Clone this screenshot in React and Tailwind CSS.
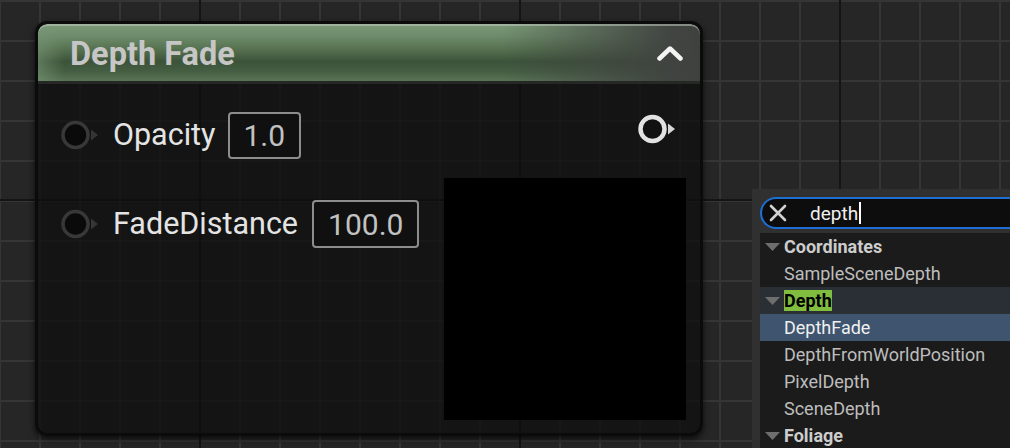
import React from "react";

function Pin({ output = false }) {
  const ring = output ? "#e2e2e2" : "#383838";
  const fill = output ? "#111111" : "#0a0a0a";
  const tri = output ? "#d6d6d6" : "#353535";
  return (
    <svg width="38" height="30" viewBox="0 0 38 30" className="shrink-0">
      <circle cx="14.5" cy="15" r={output ? 12 : 12.5} fill={fill} stroke={ring} strokeWidth={output ? 4.5 : 3.5} />
      <polygon points="30,9.5 37,15 30,20.5" fill={tri} />
    </svg>
  );
}

function Tri() {
  return (
    <svg width="15" height="8" viewBox="0 0 15 8" className="shrink-0">
      <polygon points="0,0 15,0 7.5,8" fill="#6e6e6e" />
    </svg>
  );
}

export default function App() {
  return (
    <div className="relative w-[1010px] h-[448px] overflow-hidden font-[Roboto,sans-serif] bg-[#262626] bg-[linear-gradient(90deg,#151515_2px,transparent_2px),linear-gradient(180deg,#151515_2px,transparent_2px),linear-gradient(90deg,#353535_2px,transparent_2px),linear-gradient(180deg,#353535_2px,transparent_2px)] bg-size-[320px_320px,320px_320px,40px_40px,40px_40px] bg-position-[199px_0px,0px_199px,39px_0px,0px_0px]">
      {/* Node */}
      <div className="absolute left-[35px] top-[21px] w-[668px] h-[415px] rounded-[12px] border-[3px] border-[#0b0b0b] bg-[rgba(12,14,12,0.72)] shadow-[0_3px_6px_rgba(0,0,0,0.7)] flex flex-col overflow-hidden">
        <div className="h-[57px] shrink-0 rounded-t-[9px] flex items-center justify-between pl-[32px] pr-[17px] shadow-[inset_0_2px_0_rgba(190,200,190,0.55)] bg-[linear-gradient(90deg,rgba(120,150,118,0.55)_0%,transparent_4%),linear-gradient(90deg,transparent_70%,rgba(64,67,64,0.96)_95%,#3f413f_100%),linear-gradient(180deg,#7b9a78_0%,#6d8b6a_22%,#55704f_45%,#3c533a_66%,#465f44_84%,#587455_100%)]">
          <span className="text-[32.5px] font-bold text-[#c6c6c6] leading-none pt-[3px]">Depth Fade</span>
          <svg width="26" height="16" viewBox="0 0 26 16">
            <polyline points="2.5,13.5 13,3.5 23.5,13.5" fill="none" stroke="#f4f4f4" strokeWidth="4.5" strokeLinecap="round" strokeLinejoin="round" />
          </svg>
        </div>
        <div className="h-[3px] shrink-0 bg-[#262826]" />
        <div className="flex-1 flex justify-between">
          <div className="flex flex-col pl-[23px] pt-[27px]">
            <div className="flex items-center h-[48px]">
              <Pin />
              <span className="ml-[14px] text-[30.5px] text-[#e4e4e4]">Opacity</span>
              <div className="ml-[12px] h-[47px] px-[14px] flex items-center border-2 border-[#8d8d8d] rounded-[4px] bg-[#0f100f] text-[30px] text-[#c2c2c2]">1.0</div>
            </div>
            <div className="flex items-center h-[48px] mt-[41px]">
              <Pin />
              <span className="ml-[14px] text-[30.5px] text-[#e4e4e4]">FadeDistance</span>
              <div className="ml-[14px] h-[48px] px-[14px] flex items-center border-2 border-[#8d8d8d] rounded-[4px] bg-[#0f100f] text-[30px] text-[#c2c2c2]">100.0</div>
            </div>
          </div>
          <div className="flex flex-col items-end pr-[14px] pt-[30px]">
            <div className="mr-[10px]">
              <Pin output />
            </div>
            <div className="mt-[34px] w-[242px] h-[242px] bg-black" />
          </div>
        </div>
      </div>

      {/* Search menu */}
      <div className="absolute left-[752px] top-[189px] w-[270px] h-[270px] bg-[#303030] pl-[8px] pt-[8px] flex flex-col">
        <div className="h-[32px] shrink-0 rounded-l-full border-2 border-r-0 border-[#1d6fd3] bg-[#0d0d0d] flex items-center pl-[7px]">
          <svg width="18" height="18" viewBox="0 0 18 18" className="shrink-0">
            <path d="M2 2 L16 16 M16 2 L2 16" stroke="#d2d2d2" strokeWidth="2.6" strokeLinecap="round" />
          </svg>
          <span className="ml-[23px] text-[19px] text-[#f0f0f0] leading-none">depth</span>
          <span className="ml-[1px] w-[2px] h-[22px] bg-white" />
        </div>
        <div className="mt-[4px] flex-1 bg-[#1b1b1b] flex flex-col text-[18px]">
          <div className="h-[27px] flex items-center pl-[5px] gap-[4px]">
            <Tri />
            <span className="font-bold text-[#cdcdcd]">Coordinates</span>
          </div>
          <div className="h-[27px] flex items-center pl-[24px] text-[#bdbdbd]">SampleSceneDepth</div>
          <div className="h-[27px] flex items-center pl-[5px] gap-[4px] bg-[#2a2f36]">
            <Tri />
            <span className="font-bold text-black bg-[#80bd3e] h-[21px] flex items-center">Depth</span>
          </div>
          <div className="h-[27px] flex items-center pl-[24px] text-[#f0f0f0] bg-[#3e546f]">DepthFade</div>
          <div className="h-[27px] flex items-center pl-[24px] text-[#bdbdbd]">DepthFromWorldPosition</div>
          <div className="h-[27px] flex items-center pl-[24px] text-[#bdbdbd]">PixelDepth</div>
          <div className="h-[27px] flex items-center pl-[24px] text-[#bdbdbd]">SceneDepth</div>
          <div className="h-[27px] flex items-center pl-[5px] gap-[4px]">
            <Tri />
            <span className="font-bold text-[#cdcdcd]">Foliage</span>
          </div>
        </div>
      </div>
    </div>
  );
}
